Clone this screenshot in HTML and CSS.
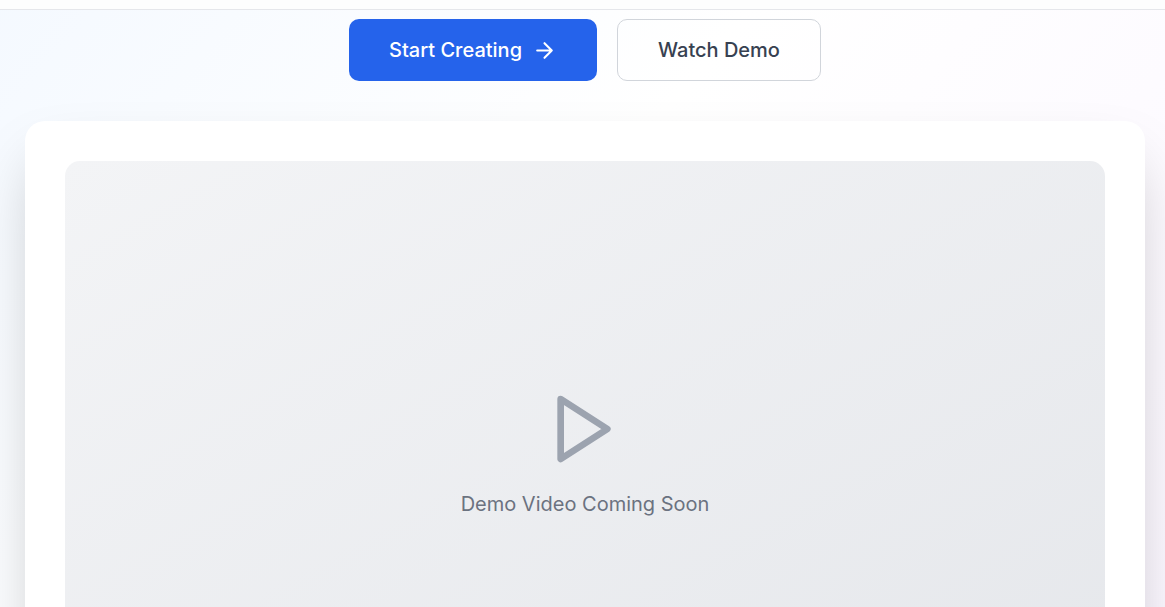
FILE: index.html
```html
<!DOCTYPE html>
<html lang="en">
<head>
<meta charset="utf-8">
<meta name="viewport" content="width=device-width, initial-scale=1">
<title>Demo</title>
<link rel="stylesheet" href="styles.css">
</head>
<body>
<header class="site-header"></header>
<main class="hero">
  <div class="actions">
    <button class="btn btn-primary" type="button">
      Start Creating
      <svg class="btn-icon" viewBox="0 0 24 24" aria-hidden="true"><path d="M5 12h14M12 5l7 7-7 7"/></svg>
    </button>
    <button class="btn btn-outline" type="button">Watch Demo</button>
  </div>
  <section class="card">
    <div class="video">
      <svg class="play" viewBox="0 0 24 24" aria-hidden="true"><path d="M4.7 3l14 9-14 9z"/></svg>
      <p class="caption">Demo Video Coming Soon</p>
    </div>
  </section>
</main>
</body>
</html>
```

FILE: styles.css
```css
* {
  box-sizing: border-box;
}

html {
  scrollbar-width: none;
}

body {
  margin: 0;
  font-family: Inter, "Liberation Sans", sans-serif;
  font-size: 20px;
  line-height: 30px;
}

.site-header {
  position: sticky;
  top: 0;
  height: 10px;
  background: #fdfefe;
  border-bottom: 1px solid #e5e7eb;
}

.hero {
  padding: 9px 20px 80px 25px;
  background: linear-gradient(to bottom right, #eff6ff, #ffffff, #faf5ff) 0 -500px / 100% 1400px;
}

.actions {
  display: flex;
  justify-content: center;
  gap: 20px;
  margin-bottom: 40px;
}

.btn {
  display: flex;
  align-items: center;
  gap: 10px;
  height: 62px;
  padding: 0 40px;
  border: 0;
  border-radius: 10px;
  font: inherit;
  font-weight: 500;
  cursor: pointer;
}

.btn-primary {
  background: #2563eb;
  color: #ffffff;
}

.btn-outline {
  background: transparent;
  border: 1px solid #d1d5db;
  color: #374151;
}

.btn-icon,
.play {
  fill: none;
  stroke: currentColor;
  stroke-width: 2;
  stroke-linecap: round;
  stroke-linejoin: round;
}

.btn-icon {
  width: 25px;
  height: 25px;
}

.card {
  padding: 40px;
  border-radius: 20px;
  background: #ffffff;
  box-shadow: 0 31px 62px -15px rgba(0, 0, 0, 0.25);
}

.video {
  display: flex;
  flex-direction: column;
  align-items: center;
  justify-content: center;
  aspect-ratio: 16 / 9;
  border-radius: 15px;
  background: linear-gradient(to bottom right, #f3f4f6, #e5e7eb);
}

.play {
  width: 80px;
  height: 80px;
  margin-bottom: 20px;
  color: #9ca3af;
}

.caption {
  margin: 0;
  color: #6b7280;
}
```
